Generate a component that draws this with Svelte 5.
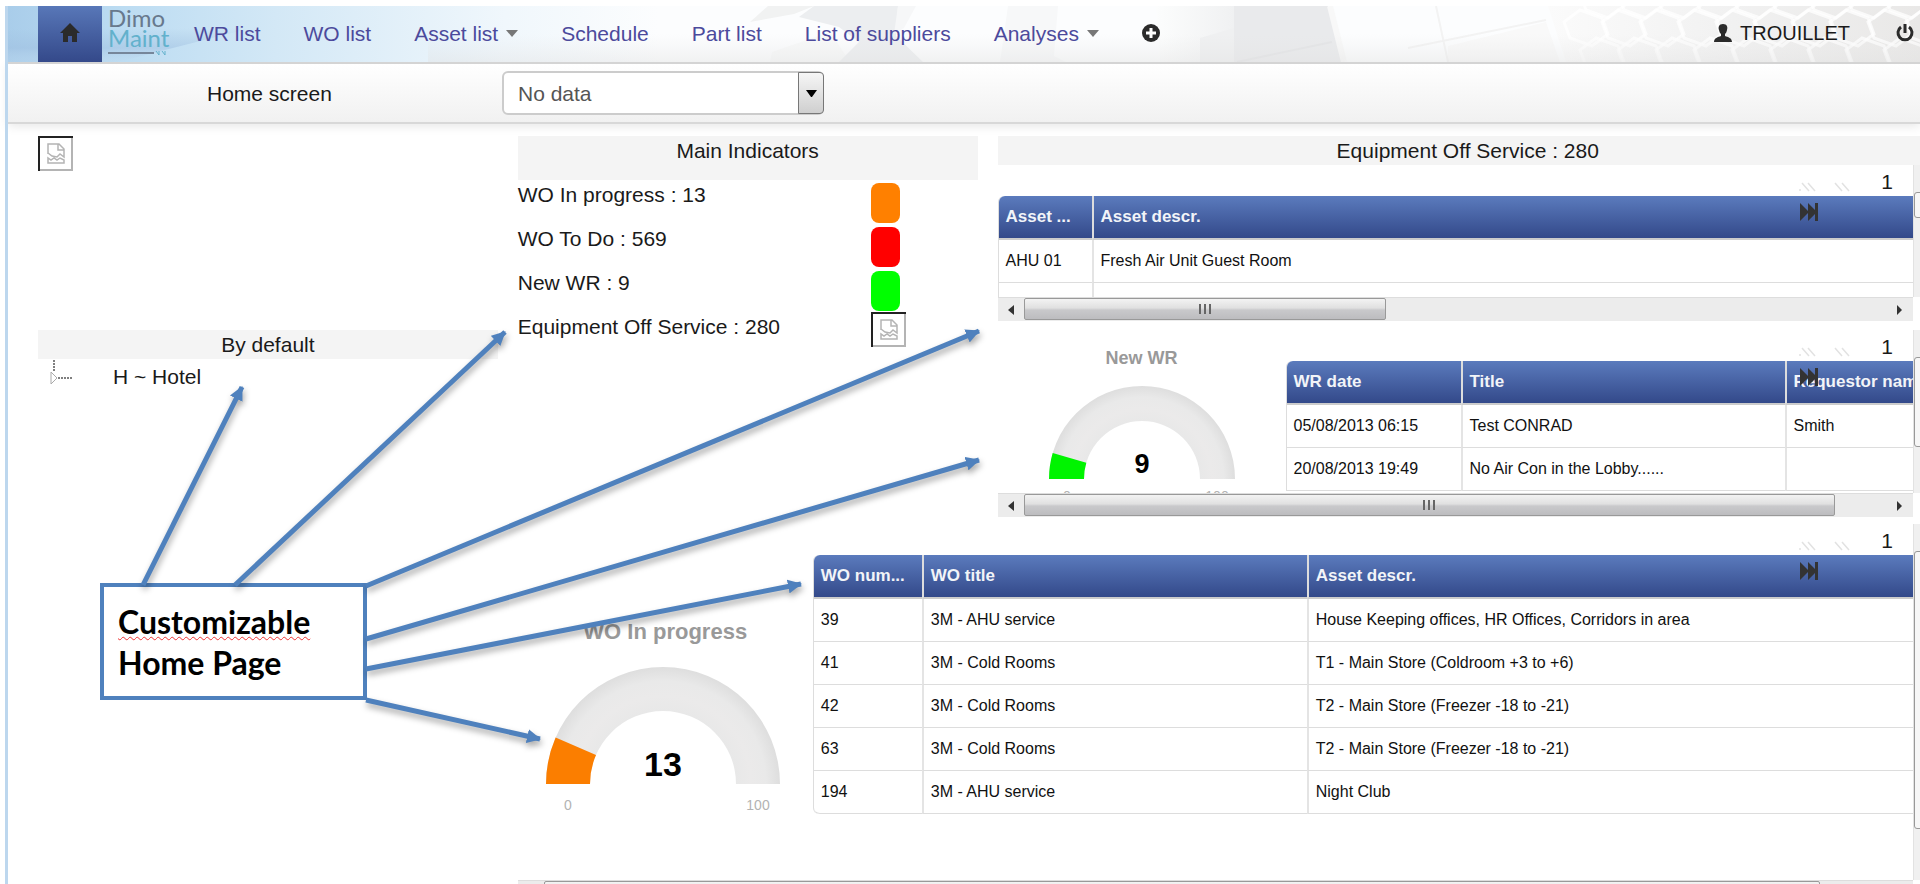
<script>
  let screen = "No data";

  const links = [
    { label: "WR list" },
    { label: "WO list" },
    { label: "Asset list", menu: true },
    { label: "Schedule" },
    { label: "Part list" },
    { label: "List of suppliers" },
    { label: "Analyses", menu: true },
  ];

  const indicators = [
    { label: "WO In progress", value: 13, color: "#ff8000" },
    { label: "WO To Do", value: 569, color: "#ff0000" },
    { label: "New WR", value: 9, color: "#00ff00" },
    { label: "Equipment Off Service", value: 280, color: null },
  ];

  const requests = [
    ["05/08/2013 06:15", "Test CONRAD", "Smith"],
    ["20/08/2013 19:49", "No Air Con in the Lobby......", ""],
  ];

  const orders = [
    ["39", "3M - AHU service", "House Keeping offices, HR Offices, Corridors in area"],
    ["41", "3M - Cold Rooms", "T1 - Main Store (Coldroom +3 to +6)"],
    ["42", "3M - Cold Rooms", "T2 - Main Store (Freezer -18 to -21)"],
    ["63", "3M - Cold Rooms", "T2 - Main Store (Freezer -18 to -21)"],
    ["194", "3M - AHU service", "Night Club"],
  ];

  // from x, from y, to x, to y
  const arrows = [
    [143, 585, 242, 387],
    [235, 585, 505, 332],
    [366, 586, 979, 331],
    [366, 639, 979, 460],
    [366, 669, 801, 584],
    [366, 700, 540, 739],
  ];

  const hexRows = [0, 1, 2];
  const hexCols = [0, 1, 2, 3, 4, 5, 6, 7, 8, 9];

  // half ring sector, centre at 0,0, from 0 to pct percent
  function arc(outer, inner, pct) {
    const a = Math.PI * (1 - pct / 100);
    const c = Math.cos(a);
    const s = -Math.sin(a);
    return `M${-outer} 0A${outer} ${outer} 0 0 1 ${outer * c} ${outer * s}L${inner * c} ${inner * s}A${inner} ${inner} 0 0 0 ${-inner} 0Z`;
  }
</script>

{#snippet brokenImage()}
  <svg class="broken" viewBox="0 0 35 35" role="img" aria-label="missing">
    <path d="M34 1v33H1" fill="none" stroke="#b4b4b4" stroke-width="2" />
    <path d="M1 35V1H35" fill="none" stroke="#222" stroke-width="2" />
    <path
      d="M10 18V8h11l5 5v8l-4-3-3 3-5-1-4-3M20 8v6h6M10 27v-5l3 2 3-2 3 2 3-2 4 2v3z"
      fill="none"
      stroke="#b4b4b4"
      stroke-width="1.5"
    />
  </svg>
{/snippet}

{#snippet pager()}
  <nav class="pager" aria-label="Pages">
    <button aria-label="First page">
      <svg width="20" height="10"><path d="M2 8h2M5 1l7 8M11 1l7 8" stroke="#e2e2e2" stroke-width="1.5" /></svg>
    </button>
    <button aria-label="Previous page">
      <svg width="20" height="10"><path d="M2 1l7 8M9 1l7 8" stroke="#e2e2e2" stroke-width="1.5" /></svg>
    </button>
    <span class="page">1</span>
    <button class="last" aria-label="Last page">
      <svg width="20" height="18"><path d="M1 0l8 8V0l7 7V0h3v18h-3v-7l-7 7v-8l-8 8z" fill="#333" /></svg>
    </button>
  </nav>
{/snippet}

{#snippet hbar(thumb)}
  <div class="hbar">
    <span class="cap"><svg width="8" height="12"><path d="M7 1v10L1 6z" fill="#333" /></svg></span>
    <div class="track">
      <div class="thumb" style="width: {thumb}%">
        <svg width="14" height="12"><path d="M2 1v10M7 1v10M12 1v10" stroke="#666" stroke-width="2" /></svg>
      </div>
    </div>
    <span class="cap"><svg width="8" height="12"><path d="M1 1v10l5-5z" fill="#333" /></svg></span>
  </div>
{/snippet}

{#snippet vbar(top, size)}
  <div class="vbar">
    <div class="vthumb" style="margin-top: {top}px; height: {size}px"></div>
  </div>
{/snippet}

{#snippet gauge(title, value, color, big)}
  <figure class="gauge" class:big>
    <figcaption>{title}</figcaption>
    <svg viewBox={big ? "-120 -120 240 155" : "-96 -96 192 122"}>
      <defs>
        <radialGradient id={big ? "ringBig" : "ring"} gradientUnits="userSpaceOnUse" cx="0" cy="0" r={big ? 117 : 93}>
          <stop offset="0.62" stop-color="#e8e8e8" />
          <stop offset="0.75" stop-color="#ebeaea" />
          <stop offset="0.88" stop-color="#e9e9e9" />
          <stop offset="1" stop-color="#dedede" />
        </radialGradient>
      </defs>
      <path d={big ? arc(117, 73, 100) : arc(93, 58, 100)} fill="url(#{big ? 'ringBig' : 'ring'})" />
      <path d={big ? arc(117, 73, value) : arc(93, 58, value)} fill={color} />
      <text class="value" x="0" y={big ? -8 : -6}>{value}</text>
      <text class="scale" x={big ? -95 : -75} y={big ? 26 : 22}>0</text>
      <text class="scale" x={big ? 95 : 75} y={big ? 26 : 22}>100</text>
    </svg>
  </figure>
{/snippet}

<div class="frame">
  <header class="navbar">
    <svg class="backdrop" viewBox="0 0 1912 56" preserveAspectRatio="none" aria-hidden="true">
      <defs>
        <linearGradient id="sky">
          <stop offset="0" stop-color="#a9cdea" />
          <stop offset="0.06" stop-color="#bcdcf2" />
          <stop offset="0.14" stop-color="#d3e8f6" />
          <stop offset="0.26" stop-color="#f0f7fc" />
          <stop offset="0.34" stop-color="#fcfdfe" />
        </linearGradient>
        <linearGradient id="fade" x2="0" y2="1">
          <stop offset="0.4" stop-color="#9fc0df" stop-opacity="0" />
          <stop offset="0.75" stop-color="#9fbfe0" stop-opacity="0.5" />
          <stop offset="1" stop-color="#c5daee" stop-opacity="0.2" />
        </linearGradient>
        <linearGradient id="floor" x2="0" y2="1">
          <stop offset="0.5" stop-color="#e6e6e6" stop-opacity="0" />
          <stop offset="1" stop-color="#e0e0e0" stop-opacity="0.4" />
        </linearGradient>
        <linearGradient id="comb">
          <stop offset="0" stop-color="#fbfbfb" />
          <stop offset="0.5" stop-color="#f1f1f1" />
          <stop offset="1" stop-color="#e9e8e7" />
        </linearGradient>
        <linearGradient id="pane">
          <stop offset="0" stop-color="#fcfdfd" />
          <stop offset="1" stop-color="#f0f1f2" />
        </linearGradient>
      </defs>
      <rect width="1912" height="56" fill="url(#sky)" />
      <path d="M0 0H330L110 56H0z" fill="url(#fade)" />
      <path d="M760 0h46l-20 8-44 8z" fill="#f1f2f2" />
      <path d="M764 46l58-20 20 30h-80z" fill="#f8f9f9" />
      <path d="M806 0h84l-2 30 27 26h-84l20-20-20-15-40-10z" fill="#eceef0" />
      <path d="M890 0h18l-12 22-10 6z" fill="#f6f7f8" />
      <path d="M1000 0h50l-4 50 12 6h-66z" fill="#f7f8f9" />
      <path d="M1148 0h78v56h-74l-2-30z" fill="url(#pane)" />
      <path d="M1192 32l34-10v34h-34z" fill="#eff0f1" />
      <path d="M1226 0h94l14 56h-108z" fill="#e9eaec" />
      <path d="M1229 56l95-20" fill="none" stroke="#e3e4e6" stroke-width="2" />
      <path d="M1322 0l14 56" fill="none" stroke="#f8f8f8" stroke-width="6" />
      <path d="M1440 40l98-24 14 40H1440z" fill="#f9f9f9" />
      <path d="M1428 0l12 56M1400 42l138-28" fill="none" stroke="#f3f3f3" stroke-width="2" />
      <path d="M1540 0h372v56H1558z" fill="url(#comb)" />
      {#each hexRows as r}
        {#each hexCols as c}
          <path
            d="M-6-20l22 8 6 16-16 12-22-8-6-16z"
            transform="translate({1594 + c * 38 - (r % 2) * 16} {r * 28 - 4})"
            fill="none"
            stroke="#fff"
            stroke-opacity="0.75"
            stroke-width="3"
          />
        {/each}
      {/each}
      <rect x="420" width="1492" height="56" fill="url(#floor)" />
    </svg>

    <a class="home" href="#home" aria-label="Home">
      <svg width="20" height="20"><path d="M10 0l10 10h-3v9h-5v-6H8v6H3v-9H0z" fill="#2b2b2b" /></svg>
    </a>
    <a class="logo" href="#home">
      <span class="dimo">Dimo</span>
      <span class="maint">Maint</span>
      <svg width="59" height="6"><path d="M0 3h46" stroke="#76869a" stroke-width="2" /><path d="M48 1l3 4V1M54 1l3 4V1" fill="none" stroke="#62b1cc" /></svg>
    </a>
    <nav class="menu">
      {#each links as link}
        <a href="#{link.label}">
          {link.label}
          {#if link.menu}<svg width="12" height="7"><path d="M0 0h12L6 7z" fill="#777" /></svg>{/if}
        </a>
      {/each}
      <button aria-label="Add">
        <svg width="18" height="18"><circle cx="9" cy="9" r="9" fill="#2b2b2b" /><path d="M9 4v10M4 9h10" stroke="#fff" stroke-width="3" /></svg>
      </button>
    </nav>
    <div class="account">
      <a href="#user">
        <svg width="18" height="18"><path d="M9 0c4 0 5 3 4 6-.4 2-1 3-2 4v2c3 1 7 2 7 6H0c0-4 4-5 7-6v-2C6 9 5.400 8 5 6 4 3 5 0 9 0z" fill="#2b2b2b" /></svg>
        TROUILLET
      </a>
      <button aria-label="Log out">
        <svg width="18" height="18"><path d="M5 3a7 7 0 1 0 8 0M9 0v9" fill="none" stroke="#2b2b2b" stroke-width="3" /></svg>
      </button>
    </div>
  </header>

  <div class="subbar">
    <label for="screen">Home screen</label>
    <div class="select">
      <select id="screen" bind:value={screen}>
        <option>No data</option>
      </select>
      <span class="drop"><svg width="11" height="7"><path d="M0 0h11L6 7H5z" /></svg></span>
    </div>
  </div>

  <main>
    <section class="tree">
      <div class="picture">{@render brokenImage()}</div>
      <h2>By default</h2>
      <div class="node">
        <svg width="26" height="28">
          <path d="M5 1v12M9 19h14" stroke="#555" stroke-width="1.500" stroke-dasharray="2 1" />
          <path d="M2 13v12l6-6z" fill="#fff" stroke="#aaa" />
        </svg>
        <a href="#hotel">H ~ Hotel</a>
      </div>
    </section>

    <section class="indicators">
      <h2 class="tall">Main Indicators</h2>
      {#each indicators as item}
        <div class="row">
          <span>{item.label} : {item.value}</span>
          {#if item.color}
            <i class="chip" style="background: {item.color}"></i>
          {:else}
            {@render brokenImage()}
          {/if}
        </div>
      {/each}
    </section>

    <section class="side">
      <h2 class="wide">Equipment Off Service : 280</h2>
      <div class="pane assets">
        <div class="view">
          {@render pager()}
          <table>
            <colgroup><col class="c93" /><col /></colgroup>
            <thead><tr><th>Asset ...</th><th>Asset descr.</th></tr></thead>
            <tbody>
              <tr><td>AHU 01</td><td>Fresh Air Unit Guest Room</td></tr>
              <tr><td></td><td></td></tr>
            </tbody>
          </table>
        </div>
        {@render vbar(27, 26)}
        {@render hbar(42)}
      </div>

      <div class="pane requests">
        <div class="view split">
          {@render gauge("New WR", 9, "#00f400", false)}
          <div class="grid">
            {@render pager()}
            <table>
              <colgroup><col class="c174" /><col class="c324" /><col /></colgroup>
              <thead><tr><th>WR date</th><th>Title</th><th>Requestor name</th></tr></thead>
              <tbody>
                {#each requests as row}
                  <tr>{#each row as cell}<td>{cell}</td>{/each}</tr>
                {/each}
              </tbody>
            </table>
          </div>
        </div>
        {@render vbar(27, 90)}
        {@render hbar(94)}
      </div>
    </section>

    <section class="pane orders">
      <div class="view split">
        {@render gauge("WO In progress", 13, "#fb7e00", true)}
        <div class="grid">
          {@render pager()}
          <table class="closed">
            <colgroup><col class="c108" /><col class="c385" /><col /></colgroup>
            <thead><tr><th>WO num...</th><th>WO title</th><th>Asset descr.</th></tr></thead>
            <tbody>
              {#each orders as row}
                <tr>{#each row as cell}<td>{cell}</td>{/each}</tr>
              {/each}
            </tbody>
          </table>
        </div>
      </div>
      {@render vbar(27, 278)}
      {@render hbar(95)}
    </section>
  </main>

  <p class="note"><span>Customizable</span><br />Home Page</p>
  <svg class="arrows" width="1920" height="884" aria-hidden="true">
    <defs>
      <marker id="head" viewBox="0 0 14 14" refX="13" refY="7" markerWidth="14" markerHeight="14" markerUnits="userSpaceOnUse" orient="auto">
        <path d="M0 0l14 7-14 7z" fill="#4f81bd" />
      </marker>
    </defs>
    {#each arrows as [x1, y1, x2, y2]}
      <line {x1} {y1} {x2} {y2} marker-end="url(#head)" />
    {/each}
  </svg>
</div>

<style>
  :global(body) {
    margin: 0;
    background: #fff;
  }
  .frame {
    position: relative;
    box-sizing: border-box;
    height: 100vh;
    overflow: hidden;
    padding: 6px 0 0 8px;
    font-family: "Liberation Sans", Arial, sans-serif;
    font-size: 21px;
    line-height: 29px;
    color: #1a1a1a;
    display: flex;
    flex-direction: column;
  }
  /* pale line down the left edge */
  .frame::before {
    content: "";
    position: absolute;
    left: 5px;
    top: 6px;
    bottom: 0;
    width: 3px;
    background: #bdd7ee;
  }
  a {
    color: inherit;
    text-decoration: none;
  }
  button {
    border: 0;
    padding: 0;
    background: none;
    display: flex;
    align-items: center;
  }
  h2 {
    margin: 0;
    font-size: 21px;
    font-weight: normal;
    line-height: 29px;
    text-align: center;
    background: #f4f4f4;
  }

  .navbar {
    position: relative;
    flex: none;
    display: flex;
    align-items: stretch;
    height: 56px;
    padding-left: 30px;
    border-bottom: 2px solid #d4d4d4;
  }
  .backdrop {
    position: absolute;
    inset: 0;
    width: 100%;
    height: 100%;
  }
  .home,
  .logo,
  .menu,
  .account {
    position: relative;
    display: flex;
    align-items: center;
  }
  .home,
  .menu,
  .account {
    padding-bottom: 2px;
  }
  .home {
    width: 64px;
    justify-content: center;
    background: linear-gradient(#5877b8, #34498a);
  }
  .logo {
    width: 60px;
    margin-left: 6px;
    flex-direction: column;
    align-items: flex-start;
    font-family: Lato, sans-serif;
    font-size: 24px;
    line-height: 20px;
    padding-top: 2px;
  }
  .dimo {
    color: #68798d;
  }
  .maint {
    color: #62b1cc;
  }
  .logo svg {
    margin-top: 2px;
  }
  .menu {
    margin-left: 26px;
    gap: 43px;
    color: #4c4a9c;
    white-space: nowrap;
  }
  .menu a,
  .account a {
    display: flex;
    align-items: center;
    gap: 8px;
  }
  .account {
    margin-left: auto;
    padding-right: 6px;
    gap: 46px;
    font-size: 20px;
  }

  .subbar {
    flex: none;
    display: flex;
    align-items: center;
    height: 58px;
    padding: 0 199px;
    background: linear-gradient(#fff, #f1f1f1);
    border-bottom: 2px solid #d8d8d8;
    box-shadow: 0 2px 10px rgba(0, 0, 0, 0.1);
  }
  .subbar label {
    width: 295px;
  }
  .select {
    position: relative;
    width: 322px;
  }
  select {
    appearance: none;
    display: block;
    width: 100%;
    height: 44px;
    padding: 0 14px;
    border: 2px solid #ccc;
    border-radius: 6px;
    background: #fff;
    font: inherit;
    color: #555;
  }
  .drop {
    position: absolute;
    top: 1px;
    right: 0;
    bottom: 1px;
    width: 24px;
    display: flex;
    align-items: center;
    justify-content: center;
    border: 1px solid #777;
    border-radius: 0 4px 4px 0;
    background: linear-gradient(#f6f6f6, #cfcfcf);
    pointer-events: none;
  }

  main {
    display: grid;
    grid-template-columns: 460fr 460fr 923fr;
    grid-template-rows: 380px 1fr;
    column-gap: 20px;
    row-gap: 8px;
    padding: 12px 0 0 30px;
    flex: 1;
  }
  .tree {
    grid-row: 1 / 3;
  }
  .picture {
    height: 194px;
  }
  .broken {
    display: block;
    width: 35px;
    height: 35px;
  }
  .node {
    display: flex;
    gap: 38px;
    padding-left: 11px;
  }
  .node a {
    line-height: 36px;
  }
  .tall {
    padding-bottom: 15px;
  }
  .row {
    display: flex;
    height: 44px;
  }
  .row span {
    width: 353px;
  }
  .chip {
    width: 29px;
    height: 40px;
    margin-top: 3px;
    border-radius: 8px;
  }

  .side {
    min-width: 0;
  }
  .wide {
    margin-right: -18px;
  }
  .pane {
    display: grid;
    grid-template-columns: minmax(0, 1fr) 7px;
  }
  .assets {
    grid-template-rows: 132px 24px;
  }
  .requests {
    grid-template-rows: 163px 24px;
    margin-top: 9px;
  }
  .orders {
    grid-column: 2 / 4;
    grid-template-rows: 356px 24px;
  }
  .view {
    overflow: hidden;
  }
  .split {
    display: flex;
  }
  .grid {
    flex: 1;
    min-width: 0;
  }

  .pager {
    position: relative;
    display: flex;
    justify-content: flex-end;
    align-items: flex-end;
    gap: 16px;
    height: 27px;
    padding: 0 20px 4px 0;
  }
  .page {
    line-height: 20px;
    margin-left: 12px;
  }
  .last {
    position: absolute;
    right: 94px;
    top: 38px;
  }

  table {
    width: 100%;
    table-layout: fixed;
    border-collapse: separate;
    border-spacing: 0;
    border-left: 1px solid #ddd;
    border-radius: 6px 0 0 0;
    font-size: 16px;
    line-height: 20px;
    color: #111;
  }
  .closed {
    border-radius: 6px 0 0 6px;
  }
  th,
  td {
    box-sizing: border-box;
    height: 43px;
    padding: 0 7px;
    text-align: left;
    white-space: nowrap;
    overflow: hidden;
    border-bottom: 1px solid #ddd;
  }
  th {
    height: 44px;
    font-size: 17px;
    color: #f2f4f8;
    background: linear-gradient(#5b7bbd, #33498a);
    border-bottom: 2px solid #ccc;
    padding-right: 0;
  }
  td + td {
    border-left: 2px solid #e4e4e4;
  }
  th + th {
    border-left: 2px solid #ddd;
  }
  th:first-child {
    border-top-left-radius: 6px;
  }
  .closed tr:last-child td:first-child {
    border-bottom-left-radius: 6px;
  }
  .c93 {
    width: 93px;
  }
  .c174 {
    width: 174px;
  }
  .c324 {
    width: 324px;
  }
  .c108 {
    width: 108px;
  }
  .c385 {
    width: 385px;
  }

  .gauge {
    flex: none;
    width: 288px;
    margin: 0;
    padding-top: 14px;
    font-weight: bold;
    text-align: center;
  }
  .gauge figcaption {
    font-size: 18px;
    color: #999;
  }
  .gauge svg {
    display: block;
    width: 192px;
    margin: 10px auto 0;
  }
  .gauge.big {
    width: 295px;
    padding-top: 93px;
  }
  .gauge.big figcaption {
    font-size: 22px;
  }
  .gauge.big svg {
    width: 240px;
    margin: 18px 0 0 25px;
  }
  .gauge text {
    text-anchor: middle;
  }
  .value {
    font-size: 27px;
    fill: #000;
  }
  .big .value {
    font-size: 34px;
  }
  .scale {
    font-size: 14px;
    font-weight: normal;
    fill: #b3b3b3;
  }

  .hbar {
    display: flex;
    box-sizing: border-box;
    height: 24px;
    background: #ececec;
    border-top: 1px solid #ddd;
  }
  .cap {
    width: 26px;
    display: flex;
    align-items: center;
    justify-content: center;
  }
  .track {
    flex: 1;
  }
  .thumb {
    box-sizing: border-box;
    height: 22px;
    display: flex;
    align-items: center;
    justify-content: center;
    border: 1px solid #999;
    border-radius: 2px;
    background: linear-gradient(#f3f3f3, #e0e0e0 45%, #c9c9cb 55%, #bcbcbf);
  }
  .vbar {
    overflow: hidden;
    background: #f0f0f0;
    border-left: 1px solid #e2e2e2;
  }
  .vthumb {
    box-sizing: border-box;
    width: 20px;
    border: 1px solid #999;
    border-radius: 3px;
    background: #f7f7f7;
  }

  /* annotation drawn over the page */
  .note {
    position: absolute;
    left: 100px;
    top: 583px;
    box-sizing: border-box;
    width: 267px;
    height: 117px;
    margin: 0;
    padding: 14px;
    border: 4px solid #4f81bd;
    background: #fff;
    font-family: Lato, Carlito, sans-serif;
    font-size: 32px;
    font-weight: bold;
    line-height: 41px;
    color: #000;
  }
  .note span {
    text-decoration: underline wavy #e33 1px;
    text-underline-offset: 2px;
    text-decoration-skip-ink: none;
  }
  .arrows {
    position: absolute;
    left: 0;
    top: 0;
    pointer-events: none;
    filter: drop-shadow(1px 4px 3px rgba(0, 0, 0, 0.35));
  }
  .arrows line {
    stroke: #4f81bd;
    stroke-width: 5;
  }
</style>
